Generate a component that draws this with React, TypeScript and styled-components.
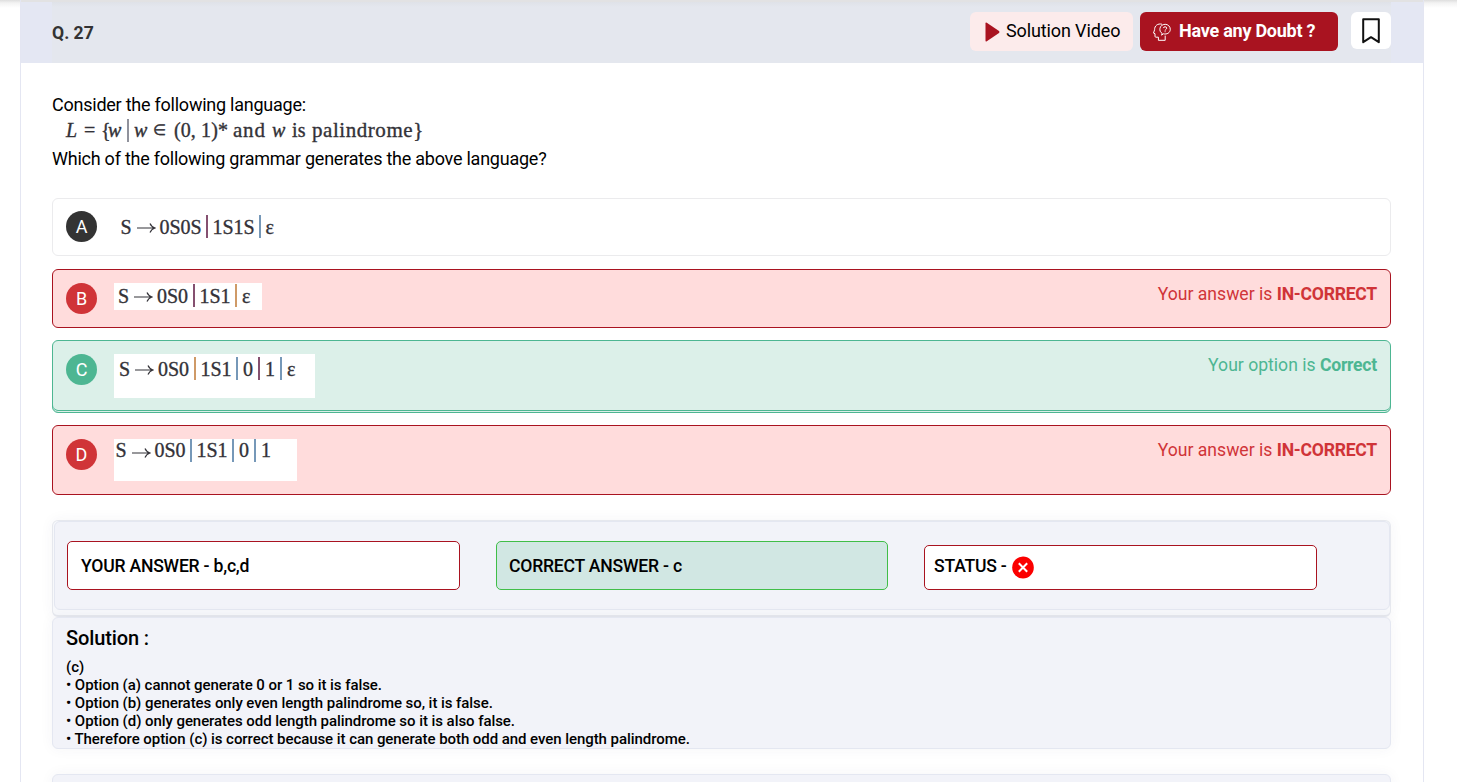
import React from "react";
import styled, { createGlobalStyle } from "styled-components";

const Global = createGlobalStyle`
  * { box-sizing: border-box; }
  body { margin: 0; background: #fff; overflow: hidden; font-family: Roboto, sans-serif; color: #000; }
`;

const Page = styled.div`
  height: 782px;
  overflow: hidden;
  padding: 0 33px 0 20px;
  background: linear-gradient(#dedede, #f3f3f3 3px, #fff 8px);
`;

const Card = styled.main`
  display: flex;
  flex-direction: column;
  height: 782px;
  background: #fff;
  border: solid #e4e6f2;
  border-width: 0 1px;
`;

const Header = styled.header`
  height: 63px;
  flex: none;
  padding: 0 32px 0 31px;
  border-top: 2px solid #e2e2e3;
  background: #e4e7f3;
`;

const HeaderRow = styled.div`
  display: flex;
  align-items: flex-start;
  height: 61px;
  padding-top: 10px;
  background: linear-gradient(#dfe2e8, #e4e7ee 5px);
`;

const Number = styled.h1`
  margin: 0 auto 0 0;
  font-size: 17.6px;
  font-weight: 700;
  line-height: 42px;
  color: #333;
`;

const HeaderButton = styled.button<{ $primary?: boolean }>`
  display: flex;
  align-items: center;
  height: 39px;
  width: ${(p) => (p.$primary ? 198 : 163)}px;
  padding: 0 0 2px ${(p) => (p.$primary ? 13 : 15)}px;
  margin-right: ${(p) => (p.$primary ? 13 : 7)}px;
  gap: ${(p) => (p.$primary ? 8 : 6)}px;
  border: 0;
  border-radius: 6px;
  font: ${(p) => (p.$primary ? 700 : 400)} 18px Roboto, sans-serif;
  letter-spacing: ${(p) => (p.$primary ? -0.25 : -0.12)}px;
  white-space: nowrap;
  color: ${(p) => (p.$primary ? "#fff" : "#000")};
  background: ${(p) => (p.$primary ? "#a91320" : "#fcebeb")};
  svg { flex: none; margin-top: 3px; }
`;

const BookmarkButton = styled.button`
  display: flex;
  align-items: center;
  justify-content: center;
  width: 40px;
  height: 37px;
  padding: 0;
  border: 0;
  border-radius: 6px;
  background: #fff;
`;

const Body = styled.div`
  flex: none;
  padding: 28px 32px 0 31px;
`;

const Question = styled.section`
  height: 107px;
  font-size: 18px;
  line-height: 27px;
  letter-spacing: -0.24px;
`;

const Line = styled.div`
  height: 27px;
  white-space: nowrap;
`;

const Formula = styled.div<{ $width?: number; $height?: number; $left?: number; $top?: number; $lh?: number }>`
  display: flex;
  align-items: flex-start;
  width: ${(p) => (p.$width ? p.$width + "px" : "auto")};
  height: ${(p) => p.$height ?? 27}px;
  padding: ${(p) => p.$top ?? 0}px 0 0 ${(p) => p.$left ?? 0}px;
  background: #fff;
  font-family: "Liberation Serif", serif;
  font-size: 20px;
  line-height: ${(p) => p.$lh ?? 26}px;
  color: #333238;
  -webkit-text-stroke: 0.35px #333238;
`;

const Token = styled.span<{ $w: number; $italic?: boolean; $size?: number; $ls?: number }>`
  flex: none;
  width: ${(p) => p.$w}px;
  white-space: nowrap;
  font-style: ${(p) => (p.$italic ? "italic" : "normal")};
  font-size: ${(p) => p.$size ?? 20}px;
  letter-spacing: ${(p) => p.$ls ?? 0}px;
`;

const Bar = styled.i<{ $color: string; $top?: number }>`
  flex: none;
  width: 2px;
  height: 23px;
  margin: ${(p) => p.$top ?? 1}px 5px 0 4px;
  background: ${(p) => p.$color};
`;

type Kind = "plain" | "wrong" | "right";
const tone = {
  plain: { line: "#ebebed", fill: "#fff", badge: "#333", text: "#333" },
  wrong: { line: "#a91320", fill: "#ffdcdc", badge: "#d03438", text: "#d03438" },
  right: { line: "#4db692", fill: "#dcf0e9", badge: "#4db692", text: "#4db692" },
};

const Option = styled.div<{ $kind: Kind; $h: number; $mb: number }>`
  display: flex;
  align-items: flex-start;
  height: ${(p) => p.$h}px;
  margin-bottom: ${(p) => p.$mb}px;
  padding: ${(p) => (p.$kind === "plain" ? 12 : 13)}px 13px 0 13px;
  border: 1px solid ${(p) => tone[p.$kind].line};
  border-radius: 6px;
  background: ${(p) => tone[p.$kind].fill};
  box-shadow: ${(p) => (p.$kind === "right" ? "inset 0 -1px #dcf0e9, inset 0 -2px #4db692" : "none")};
`;

const Badge = styled.span<{ $kind: Kind }>`
  flex: none;
  width: 31px;
  height: 31px;
  margin-right: 17px;
  border-radius: 50%;
  text-align: center;
  font-size: 18px;
  line-height: 32px;
  color: #fff;
  background: ${(p) => tone[p.$kind].badge};
`;

const Verdict = styled.p<{ $kind: Kind }>`
  margin: 0 0 0 auto;
  font-size: 17.6px;
  line-height: 22px;
  white-space: nowrap;
  color: ${(p) => tone[p.$kind].text};
  b { letter-spacing: -0.25px; }
`;

const Summary = styled.section`
  height: 97px;
  padding-left: 1px;
  border: 1px solid #e6e8ee;
  border-bottom-width: 2px;
  border-radius: 6px;
  background: #f7f8fb;
  box-shadow: 0 0 14px rgba(60, 60, 90, 0.05);
`;

const SummaryRow = styled.div`
  display: flex;
  align-items: flex-end;
  height: 89px;
  padding: 0 0 19px 12px;
  border: 1px solid #e4e7f1;
  border-radius: 6px;
  background: #f2f3f9;
`;

const Field = styled.div<{ $w: number; $h: number; $mr: number; $pad: number; $good?: boolean }>`
  display: flex;
  align-items: center;
  width: ${(p) => p.$w}px;
  height: ${(p) => p.$h}px;
  margin-right: ${(p) => p.$mr}px;
  padding-left: ${(p) => p.$pad}px;
  gap: 5px;
  border: 1px solid ${(p) => (p.$good ? "#40be48" : "#a91320")};
  border-radius: 5px;
  font-size: 17.6px;
  font-weight: 500;
  letter-spacing: -0.22px;
  white-space: nowrap;
  background: ${(p) => (p.$good ? "#d1e7e3" : "#fff")};
`;

const StatusLabel = styled.span`
  padding-bottom: 3px;
`;

const Panel = styled.section<{ $h: number; $mb?: number }>`
  height: ${(p) => p.$h}px;
  margin-bottom: ${(p) => p.$mb ?? 0}px;
  padding: 7px 13px 0;
  border: 1px solid #e4e7f1;
  border-radius: 6px;
  background: #f2f3f9;
  box-shadow: 0 0 14px rgba(60, 60, 90, 0.05);
`;

const PanelTitle = styled.h2`
  margin: 0 0 4px;
  font-size: 20px;
  font-weight: 500;
  line-height: 27px;
  letter-spacing: -0.12px;
`;

const SolutionLine = styled.div`
  height: 18px;
  font-size: 15px;
  font-weight: 500;
  line-height: 22px;
  letter-spacing: -0.06px;
  white-space: nowrap;
`;

const Play = () => (
  <svg width="15" height="20" viewBox="0 0 15 20">
    <path d="M.5 1.5Q.5 0 1.8.8L14 9Q15 10 14 11L1.8 19.2Q.5 20 .5 18.5Z" fill="#a91320" />
  </svg>
);

const Doubt = () => (
  <svg width="18" height="18" viewBox="0 0 18 18" fill="none" stroke="#fff" strokeWidth="1">
    <path d="M9 1.2C4.8.2 1.5 2.7 1.6 6.7L.5 10.1L2 10.7V13.3Q2 14.2 3 14.2H5.4V17.3H12.2V12.6" />
    <path d="M9.2 10.4C5.4 8.6 6.1 1.4 12.2 1.3C15 1.3 17.3 3.5 17.3 6.3C17.3 9.6 14 11.8 10.4 10.8L8.6 12.2Z" />
    <path d="M10.3 5.1C10.6 3.3 13.7 3.3 13.7 5.1C13.7 6.4 12.1 6.3 12.1 7.6M12.1 8.3V9.2" />
  </svg>
);

const Bookmark = () => (
  <svg width="18" height="26" viewBox="0 0 18 26" fill="none" stroke="#111" strokeWidth="2">
    <path d="M1.2 1.2H16.8V24.2L9 19.2L1.2 24.2Z" strokeLinejoin="round" />
  </svg>
);

const Cross = () => (
  <svg width="22" height="23" viewBox="0 0 22 23">
    <ellipse cx="11" cy="11.5" rx="10.8" ry="11" fill="#fb0000" />
    <path d="M6.8 7.2L15.2 15.8M15.2 7.2L6.8 15.8" stroke="#fff" strokeWidth="2" />
  </svg>
);

const ArrowGlyph = styled.svg`
  flex: none;
  margin: 8px 4px 0 5px;
`;

const Arrow = () => (
  <ArrowGlyph width="19" height="12" viewBox="0 0 19 12" fill="none" stroke="#333238" strokeWidth="1.2">
    <path d="M0 6H18M13 1.5Q14.5 5 18 6Q14.5 7 13 10.5" />
  </ArrowGlyph>
);

const blue = "#7698b8";
const tan = "#cf9a67";
const plum = "#855070";

export default function App() {
  return (
    <Page>
      <Global />
      <Card>
        <Header>
          <HeaderRow>
            <Number>Q. 27</Number>
            <HeaderButton><Play />Solution Video</HeaderButton>
            <HeaderButton $primary><Doubt />Have any Doubt ?</HeaderButton>
            <BookmarkButton aria-label="Bookmark"><Bookmark /></BookmarkButton>
          </HeaderRow>
        </Header>
        <Body>
          <Question>
            <Line>Consider the following language:</Line>
            <Formula $left={14} $top={1} $lh={23}>
              <Token $w={18} $italic>L</Token>
              <Token $w={17}>=</Token>
              <Token $w={7}>{"{"}</Token>
              <Token $w={15} $italic $ls={1}>w</Token>
              <Bar $color="#90929c" $top={0} />
              <Token $w={19} $italic>w</Token>
              <Token $w={21} $size={15}>∈</Token>
              <Token $w={59} $ls={0.1}>(0, 1)*</Token>
              <Token $w={39} $size={21} $ls={0.8}>and</Token>
              <Token $w={20} $italic>w</Token>
              <Token $w={20} $ls={0.3}>is</Token>
              <Token $w={114} $size={21} $ls={0.55}>palindrome{"}"}</Token>
            </Formula>
            <Line>Which of the following grammar generates the above language?</Line>
          </Question>

          <Option $kind="plain" $h={58} $mb={13}>
            <Badge $kind="plain">A</Badge>
            <Formula $left={6.5} $top={3}>
              <Token $w={11}>S</Token><Arrow />
              <Token $w={42}>0S0S</Token><Bar $color={plum} />
              <Token $w={42}>1S1S</Token><Bar $color={blue} />
              <Token $w={10}>ε</Token>
            </Formula>
          </Option>

          <Option $kind="wrong" $h={59} $mb={12}>
            <Badge $kind="wrong">B</Badge>
            <Formula $left={4} $width={148} $height={27}>
              <Token $w={11}>S</Token><Arrow />
              <Token $w={31.5}>0S0</Token><Bar $color={plum} />
              <Token $w={31.5}>1S1</Token><Bar $color={tan} />
              <Token $w={10}>ε</Token>
            </Formula>
            <Verdict $kind="wrong">Your answer is <b>IN-CORRECT</b></Verdict>
          </Option>

          <Option $kind="right" $h={73} $mb={12}>
            <Badge $kind="right">C</Badge>
            <Formula $left={5} $width={201} $height={44} $top={2}>
              <Token $w={11}>S</Token><Arrow />
              <Token $w={31.5}>0S0</Token><Bar $color={tan} />
              <Token $w={31.5}>1S1</Token><Bar $color={blue} />
              <Token $w={11}>0</Token><Bar $color={plum} />
              <Token $w={11}>1</Token><Bar $color={blue} />
              <Token $w={10}>ε</Token>
            </Formula>
            <Verdict $kind="right">Your option is <b>Correct</b></Verdict>
          </Option>

          <Option $kind="wrong" $h={70} $mb={25}>
            <Badge $kind="wrong">D</Badge>
            <Formula $left={1.5} $width={183} $height={42} $lh={22}>
              <Token $w={11}>S</Token><Arrow />
              <Token $w={31}>0S0</Token><Bar $color={blue} $top={0} />
              <Token $w={31.5}>1S1</Token><Bar $color={blue} $top={0} />
              <Token $w={11}>0</Token><Bar $color={blue} $top={0} />
              <Token $w={11}>1</Token>
            </Formula>
            <Verdict $kind="wrong">Your answer is <b>IN-CORRECT</b></Verdict>
          </Option>

          <Summary>
            <SummaryRow>
              <Field $w={393} $h={49} $mr={36} $pad={13}>YOUR ANSWER - b,c,d</Field>
              <Field $w={392} $h={49} $mr={36} $pad={12} $good>CORRECT ANSWER - c</Field>
              <Field $w={393} $h={45} $mr={0} $pad={9}><StatusLabel>STATUS -</StatusLabel><Cross /></Field>
            </SummaryRow>
          </Summary>

          <Panel $h={132} $mb={25}>
            <PanelTitle>Solution :</PanelTitle>
            <SolutionLine>(c)</SolutionLine>
            <SolutionLine>• Option (a) cannot generate 0 or 1 so it is false.</SolutionLine>
            <SolutionLine>• Option (b) generates only even length palindrome so, it is false.</SolutionLine>
            <SolutionLine>• Option (d) only generates odd length palindrome so it is also false.</SolutionLine>
            <SolutionLine>• Therefore option (c) is correct because it can generate both odd and even length palindrome.</SolutionLine>
          </Panel>
          <Panel $h={60} />
        </Body>
      </Card>
    </Page>
  );
}
